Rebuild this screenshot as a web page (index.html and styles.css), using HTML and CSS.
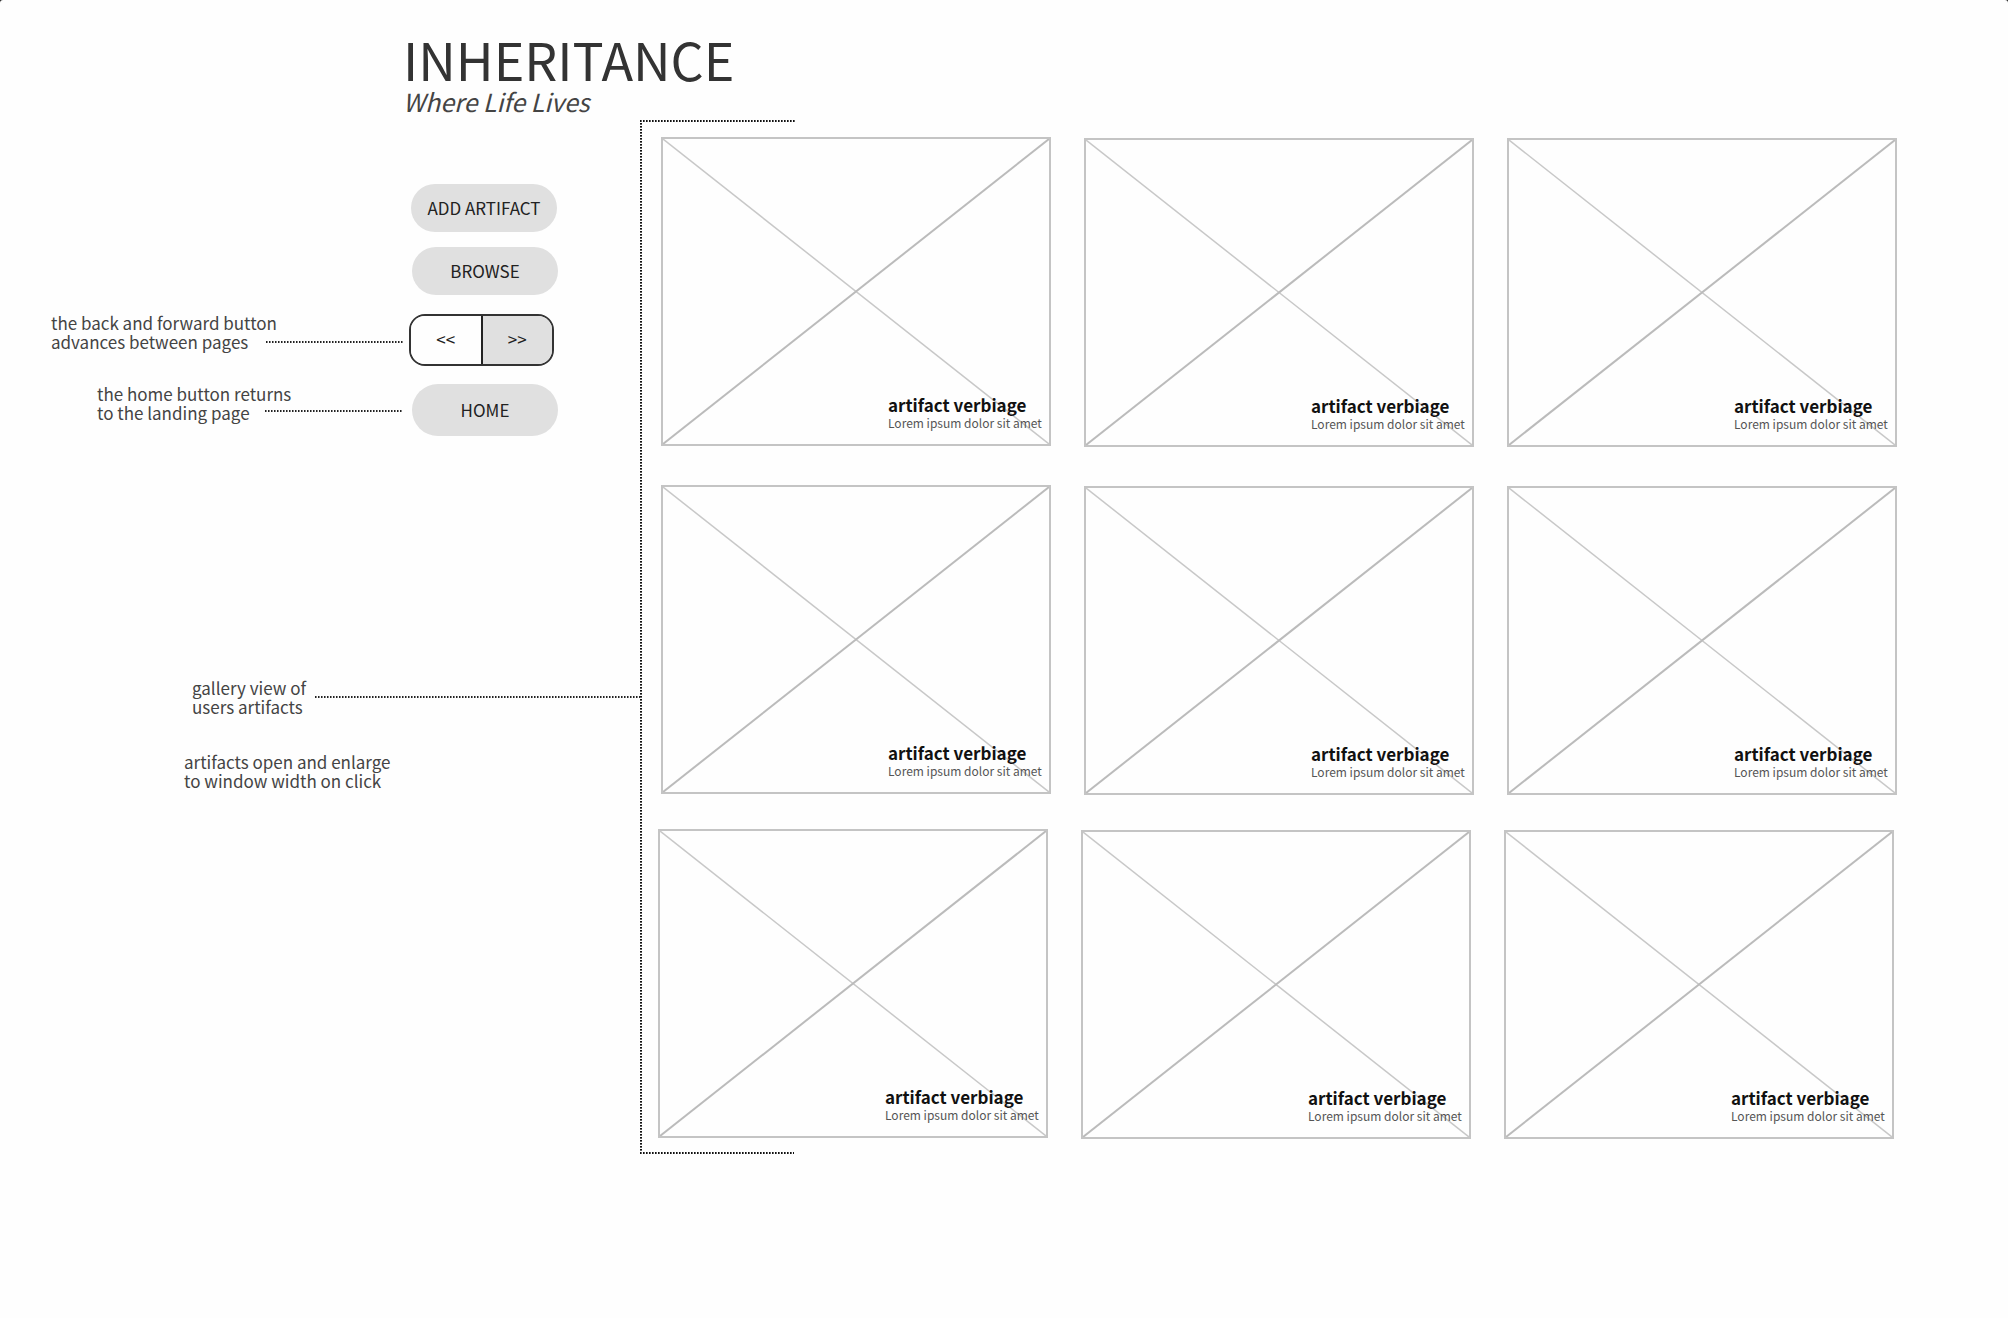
FILE: index.html
```html
<!DOCTYPE html>
<html lang="en">
<head>
<meta charset="utf-8">
<meta name="viewport" content="width=device-width, initial-scale=1">
<title>Inheritance</title>
<link rel="stylesheet" href="styles.css">
</head>
<body>
<svg class="symbols" width="0" height="0" aria-hidden="true">
  <symbol id="cross" viewBox="0 0 386 305" preserveAspectRatio="none">
    <path class="fall" d="M0 0L386 305"/>
    <path class="rise" d="M0 305L386 0"/>
  </symbol>
</svg>
<header class="masthead">
  <h1 class="title">INHERITANCE</h1>
  <p class="tagline">Where Life Lives</p>
</header>
<div class="layout">
  <aside class="sidebar">
    <nav class="controls">
      <div class="control"><button class="pill pill-first" type="button">ADD ARTIFACT</button></div>
      <div class="control"><button class="pill" type="button">BROWSE</button></div>
      <div class="control control-pager">
        <p class="note">the back and forward button<span class="note-end">advances between pages<span class="leader"></span></span></p>
        <div class="pager">
          <button class="page-button" type="button">&lt;&lt;</button>
          <button class="page-button page-next" type="button">&gt;&gt;</button>
        </div>
      </div>
      <div class="control control-home">
        <p class="note note-home">the home button returns<span class="note-end">to the landing page<span class="leader"></span></span></p>
        <button class="pill pill-tall" type="button">HOME</button>
      </div>
    </nav>
    <div class="gallery-note">
      <p class="text">gallery view of<br>users artifacts</p>
      <span class="leader"></span>
    </div>
    <p class="text open-note">artifacts open and enlarge<br>to window width on click</p>
  </aside>
  <main class="gallery">
    <div class="row">
      <a class="card" href="#"><svg class="cross"><use href="#cross"/></svg><span class="caption"><strong>artifact verbiage</strong><small>Lorem ipsum dolor sit amet</small></span></a>
      <a class="card" href="#"><svg class="cross"><use href="#cross"/></svg><span class="caption"><strong>artifact verbiage</strong><small>Lorem ipsum dolor sit amet</small></span></a>
      <a class="card" href="#"><svg class="cross"><use href="#cross"/></svg><span class="caption"><strong>artifact verbiage</strong><small>Lorem ipsum dolor sit amet</small></span></a>
    </div>
    <div class="row row-middle">
      <a class="card" href="#"><svg class="cross"><use href="#cross"/></svg><span class="caption"><strong>artifact verbiage</strong><small>Lorem ipsum dolor sit amet</small></span></a>
      <a class="card" href="#"><svg class="cross"><use href="#cross"/></svg><span class="caption"><strong>artifact verbiage</strong><small>Lorem ipsum dolor sit amet</small></span></a>
      <a class="card" href="#"><svg class="cross"><use href="#cross"/></svg><span class="caption"><strong>artifact verbiage</strong><small>Lorem ipsum dolor sit amet</small></span></a>
    </div>
    <div class="row row-last">
      <a class="card" href="#"><svg class="cross"><use href="#cross"/></svg><span class="caption"><strong>artifact verbiage</strong><small>Lorem ipsum dolor sit amet</small></span></a>
      <a class="card" href="#"><svg class="cross"><use href="#cross"/></svg><span class="caption"><strong>artifact verbiage</strong><small>Lorem ipsum dolor sit amet</small></span></a>
      <a class="card" href="#"><svg class="cross"><use href="#cross"/></svg><span class="caption"><strong>artifact verbiage</strong><small>Lorem ipsum dolor sit amet</small></span></a>
    </div>
  </main>
</div>
</body>
</html>
```
FILE: styles.css
```css
* { box-sizing: border-box; }

html { background: #222; }

body {
  margin: 0;
  min-height: 100vh;
  background: #fefefe;
  border-radius: 3px 3px 0 0;
  color: #444;
  font-family: "Noto Sans CJK SC", "Noto Sans", sans-serif;
  font-size: 17px;
  line-height: 19px;
}

p, h1 { margin: 0; }

button {
  padding: 0 0 2px;
  border: 0;
  background: #e0e0e0;
  color: #222;
  font: inherit;
}

.symbols { display: block; }

/* Title block */
.masthead {
  height: 120px;
  padding: 29px 0 0 403px;
}

.title {
  color: #333;
  font-size: 52px;
  font-weight: 400;
  line-height: 60px;
}

.tagline {
  font-size: 25px;
  font-style: italic;
  line-height: 25px;
}

.layout {
  display: flex;
  align-items: flex-start;
  padding-right: 111px;
}

/* Controls and their notes */
.sidebar {
  flex: none;
  width: 640px;
  padding-top: 64px;
}

.controls {
  display: flex;
  flex-direction: column;
  gap: 15px;
}

.control {
  display: flex;
  justify-content: flex-end;
  align-items: center;
  padding-right: 82px;
}

.control-pager { padding: 3px 86px 0 0; }

.control-home { padding-top: 3px; }

.pill {
  width: 146px;
  height: 48px;
  border-radius: 24px;
}

.pill-first { margin-right: 1px; }

.pill-tall { height: 52px; border-radius: 26px; }

.pager {
  display: flex;
  width: 145px;
  height: 52px;
  overflow: hidden;
  border: 2px solid #333;
  border-radius: 16px;
}

.page-button {
  flex: 1;
  background: #fefefe;
}

.page-next {
  border-left: 2px solid #222;
  background: #e0e0e0;
}

.note {
  flex: 1;
  margin: 0 5px 15px 51px;
}

.note-home { margin: 0 9px 14px 97px; }

.note-end {
  display: flex;
  justify-content: space-between;
  align-items: center;
}

.leader {
  flex: 1;
  height: 2px;
  background: repeating-linear-gradient(90deg, #222 0 1px, #888 1px 2px, transparent 2px 3px);
}

.note-end .leader { flex: 0 0 138px; }

.note-home .leader { margin-bottom: 4px; }

.gallery-note {
  display: flex;
  align-items: center;
  gap: 9px;
  margin: 242px 0 0 192px;
}

.open-note { margin: 36px 0 0 184px; }

/* Gallery with its dotted bracket */
.gallery {
  flex: 1;
  padding: 17px 0 16px 21px;
  background:
    repeating-linear-gradient(90deg, #111 0 1px, #666 1px 2px, transparent 2px 3px) 0 0 / 156px 2px no-repeat,
    repeating-linear-gradient(90deg, #111 0 1px, #666 1px 2px, transparent 2px 3px) 0 100% / 154px 2px no-repeat,
    repeating-linear-gradient(#111 0 1px, #666 1px 2px, transparent 2px 3px) 0 0 / 2px 100% no-repeat;
}

.row {
  display: flex;
  gap: 33px;
}

.row-middle { margin-top: 39px; }

.row-last { margin: 35px 3px 0 -3px; }

.card {
  display: grid;
  flex: 1;
  aspect-ratio: 390 / 309;
  border: 2px solid #c4c4c4;
  color: #555;
  text-decoration: none;
}

.card + .card {
  position: relative;
  top: 1px;
}

.cross {
  grid-area: 1 / 1;
  width: 100%;
  height: 100%;
}

.fall, .rise {
  fill: none;
  stroke: #c8c8c8;
  stroke-width: 1.5;
}

.rise {
  stroke: #bbb;
  stroke-width: 2;
}

.caption {
  display: flex;
  flex-direction: column;
  grid-area: 1 / 1;
  place-self: end;
  width: 161px;
  padding-bottom: 13px;
}

.caption strong {
  color: #111;
  font-size: 17px;
  line-height: 20px;
}

.caption small {
  font-size: 12px;
  line-height: 16px;
}
```
